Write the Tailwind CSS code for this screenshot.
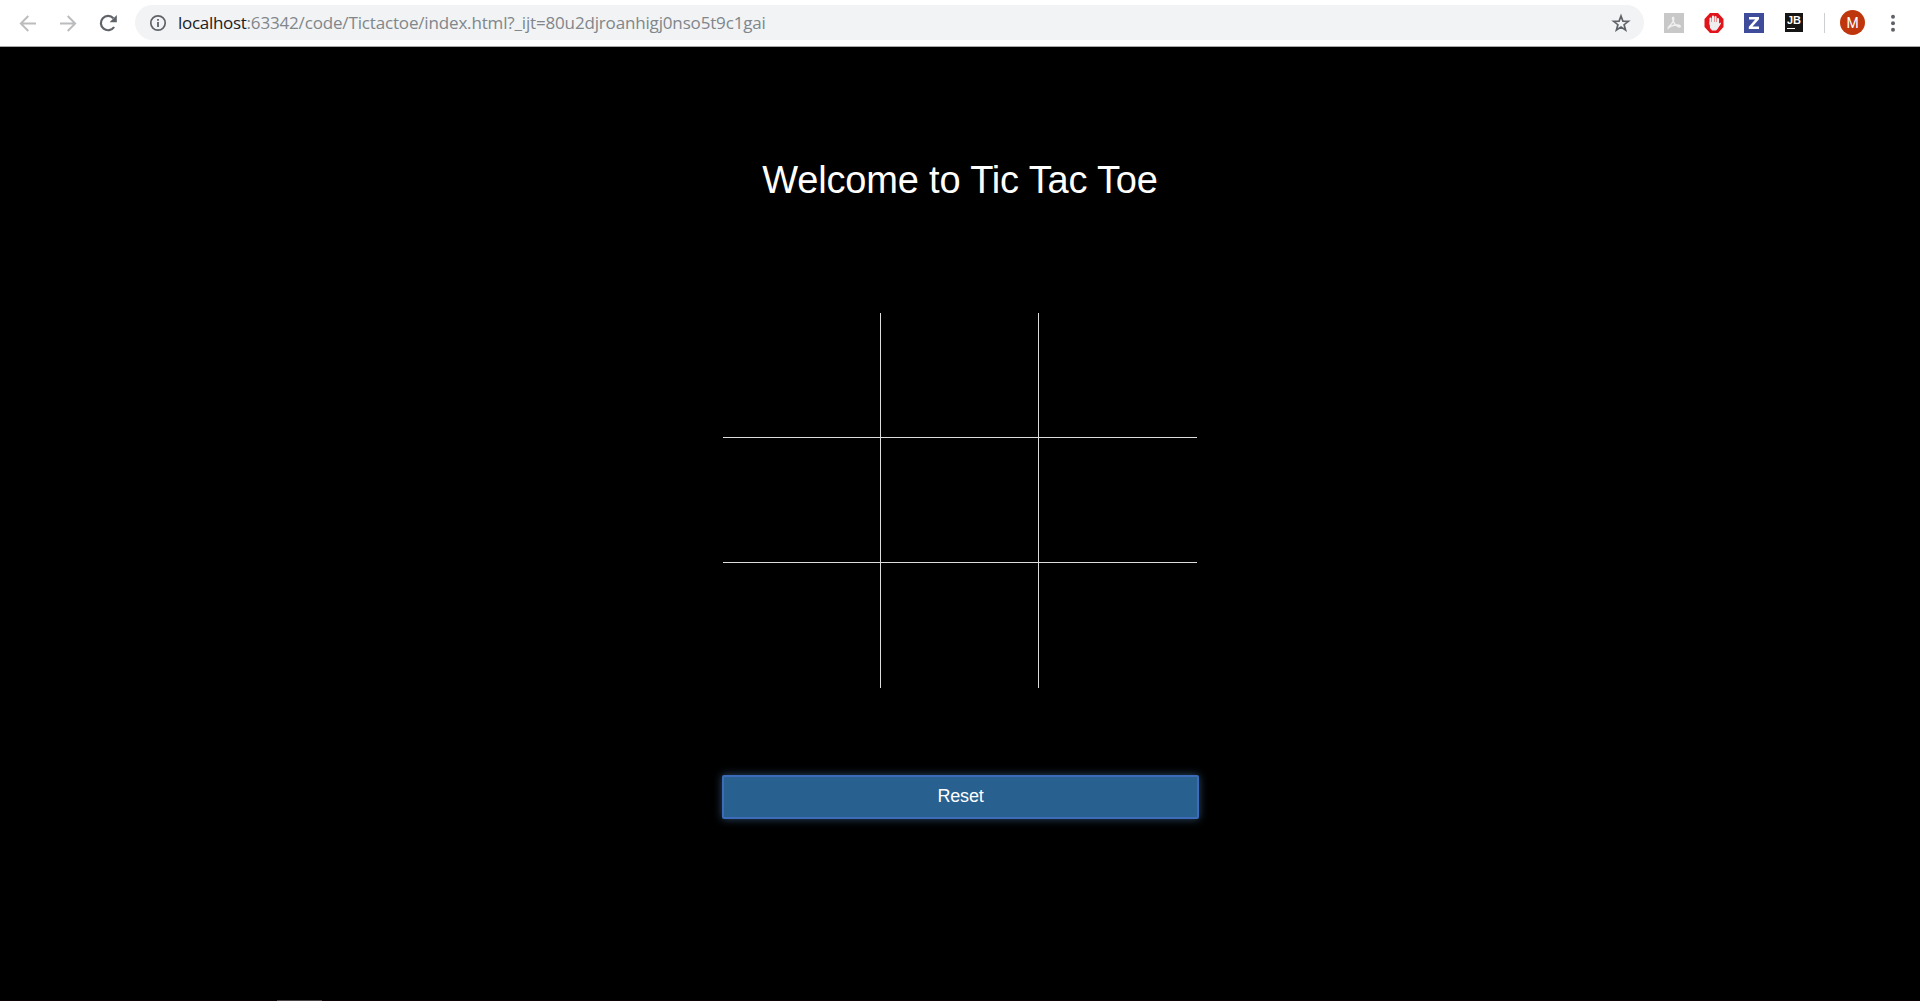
<!DOCTYPE html>
<html lang="en">
<head>
<meta charset="utf-8">
<title>Tic Tac Toe</title>
<script src="https://cdn.jsdelivr.net/npm/@tailwindcss/browser@4"></script>
</head>
<body class="h-screen overflow-hidden bg-black font-['Liberation_Sans',Arial,sans-serif] text-white flex flex-col">
<header class="flex h-[47px] shrink-0 items-start border-b border-[#a9a9a9] bg-white pl-[18px] pt-[5px] text-[#5f6368]">
  <div class="flex h-[35px] w-[117px] shrink-0 items-center gap-[20px]">
    <svg class="size-5 text-[#babcbe]" viewBox="0 0 20 20" fill="none" stroke="currentColor" stroke-width="1.9"><path d="M18 10.500H3M10.300 3L2.800 10.500L10.300 18"/></svg>
    <svg class="size-5 text-[#babcbe]" viewBox="0 0 20 20" fill="none" stroke="currentColor" stroke-width="1.9"><path d="M2 10.500H17M9.700 3L17.200 10.500L9.700 18"/></svg>
    <svg class="size-5" viewBox="0 0 20 20"><path d="M16.100 14A7.200 7.200 0 1 1 15.400 5.200" fill="none" stroke="currentColor" stroke-width="2.200"/><path d="M18.800 2V9.200H11.600Z" fill="currentColor"/></svg>
  </div>
  <div class="flex h-[35px] w-[1509px] shrink-0 items-center rounded-full bg-[#f1f3f4] pl-[14px] pr-[13px]">
    <svg class="size-[18px]" viewBox="0 0 18 18"><circle cx="9" cy="9" r="7.200" fill="none" stroke="currentColor" stroke-width="1.700"/><path d="M8.100 8H9.900V13H8.100ZM8.100 5H9.900V6.800H8.100Z" fill="currentColor"/></svg>
    <div class="ml-[11px] grow whitespace-nowrap font-['Open_Sans',sans-serif] text-[17px] leading-[35px] tracking-[-0.16px] text-[#80868b]"><span class="tracking-[-0.3px] text-[#202124]">localhost</span>:63342/code/Tictactoe/index.html?_ijt=80u2djroanhigj0nso5t9c1gai</div>
    <svg class="size-5" viewBox="0 0 20 20" fill="none" stroke="currentColor" stroke-width="1.700"><path d="M10 3L11.900 8.100L17.400 8.300L13.100 11.700L14.600 17L10 14L5.400 17L6.900 11.700L2.600 8.300L8.100 8.100Z"/></svg>
  </div>
  <div class="flex h-[35px] items-center pl-5">
    <svg class="size-5" viewBox="0 0 20 20"><path fill="#c8c8c8" d="M0 0H20V20H0Z"/><path d="M4 15.500C3 13.500 9.800 11.500 9.800 5.500C9.700 3.500 8 4 8.500 6C9 9 12 13.500 15.500 14C17.500 13.800 16 11.800 13 12C9 12.200 5 14 4 15.500Z" fill="none" stroke="#f0f0f0" stroke-width="1.300"/></svg>
    <svg class="ml-5 size-5" viewBox="0 0 20 20"><path fill="#e1141b" d="M6 0H14L19.500 6V14L14 20H6L0.500 14V6Z"/><path d="M6.500 11V5.500M9 10V3.500M11.500 10V4M14 11V6" stroke="#eee" stroke-width="2.100" stroke-linecap="round"/><path d="M5.500 9H12.500L15 10.500L16.500 9.500L17 10.500L13.500 16L12 17.500H8L6 15Z" fill="#eee"/></svg>
    <svg class="ml-5 size-5" viewBox="0 0 20 20"><path fill="#3f4b9b" d="M0 0H20V20H0Z"/><path fill="#fff" d="M5 4H15V6.200L8.500 13.500H15V16H4.800V13.700L11.200 6.500H5Z"/></svg>
    <div class="ml-[21px] h-[19px] w-[18px] bg-[#151515] text-center text-[11px] font-bold leading-[15px] text-white"><div class="h-[15px]">JB</div><div class="ml-[2px] h-px w-2 bg-white"></div></div>
    <div class="ml-[21px] h-5 w-px bg-[#ccced0]"></div>
    <div class="ml-[15px] size-[25px] rounded-full bg-[#bf360c] text-center font-[Roboto,sans-serif] text-[14px] leading-[26px] text-white">M</div>
    <svg class="ml-[18px] h-5 w-5" viewBox="0 0 20 20" fill="currentColor"><circle cx="10" cy="3.800" r="2"/><circle cx="10" cy="10.300" r="2"/><circle cx="10" cy="16.800" r="2"/></svg>
  </div>
</header>
<main class="flex grow flex-col items-center pt-[113px]">
  <h1 class="h-10 whitespace-nowrap text-[38px] leading-10 tracking-[-0.16px]">Welcome to Tic Tac Toe</h1>
  <div class="mt-[113px] grid h-[375px] w-[474px] grid-cols-3 grid-rows-3">
    <div class="border-b border-r border-[#ddd]"></div><div class="border-b border-r border-[#ddd]"></div><div class="border-b border-[#ddd]"></div>
    <div class="border-b border-r border-[#ddd]"></div><div class="border-b border-r border-[#ddd]"></div><div class="border-b border-[#ddd]"></div>
    <div class="border-r border-[#ddd]"></div><div class="border-r border-[#ddd]"></div><div></div>
  </div>
  <button class="ml-px mt-[87px] h-11 w-[477px] rounded-[2px] border-2 border-[#3b6bb9] bg-[#286090] pb-[2px] text-[18px] leading-none tracking-[-0.2px] shadow-[0_0_8px_rgba(75,125,175,0.6)]">Reset</button>
</main>
<footer class="h-px shrink-0 bg-[#0c0203] pl-[277px]"><div class="h-px w-[45px] bg-[#4a4446]"></div></footer>
</body>
</html>
